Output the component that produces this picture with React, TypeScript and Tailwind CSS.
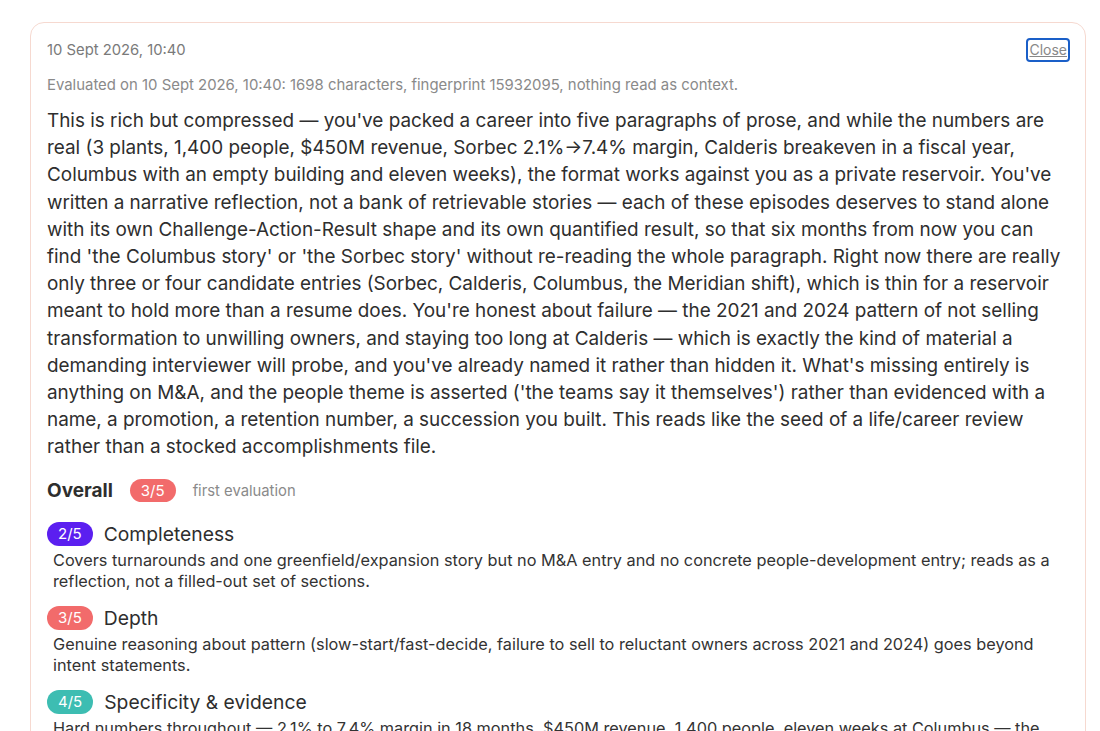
import React from 'react'

const font = { fontFamily: 'Inter, "Noto Sans", sans-serif' }

type Criterion = { score: number; title: string; text: string }

const criteria: Criterion[] = [
  {
    score: 2,
    title: 'Completeness',
    text: 'Covers turnarounds and one greenfield/expansion story but no M&A entry and no concrete people-development entry; reads as a reflection, not a filled-out set of sections.',
  },
  {
    score: 3,
    title: 'Depth',
    text: 'Genuine reasoning about pattern (slow-start/fast-decide, failure to sell to reluctant owners across 2021 and 2024) goes beyond intent statements.',
  },
  {
    score: 4,
    title: 'Specificity & evidence',
    text: 'Hard numbers throughout — 2.1% to 7.4% margin in 18 months, $450M revenue, 1,400 people, eleven weeks at Columbus — the kind of detail that survives a follow-up question from an interviewer who wants to test it.',
  },
]

function badgeColor(score: number) {
  if (score <= 2) return 'bg-[#5b1ff0]'
  if (score === 3) return 'bg-[#f26b6b]'
  return 'bg-[#3dbdb2]'
}

function Badge({ score }: { score: number }) {
  return (
    <span className={`inline-flex h-6 items-center rounded-full px-[11px] text-[15px] leading-none text-white ${badgeColor(score)}`}>
      {score}/5
    </span>
  )
}

export default function App() {
  return (
    <div className="min-h-screen bg-white pl-[30px] pr-[14px] pt-[22px] text-[#2e2e2e]" style={font}>
      <div className="rounded-[14px] border border-[#f6d9d0] bg-white px-4 pb-10 pt-[16px]">
        <div className="flex items-start justify-between">
          <div className="pt-[1px] text-[14.8px] leading-5 text-[#7a7a7a]">10 Sept 2026, 10:40</div>
          <button className="-mr-[1px] -mt-[1px] rounded-[4px] border-2 border-[#1a5fc8] px-[1px] text-[14px] leading-[20px] text-[#888] underline">
            Close
          </button>
        </div>
        <p className="mt-[13px] text-[14.9px] leading-5 text-[#8a8a8a]">
          Evaluated on 10 Sept 2026, 10:40: 1698 characters, fingerprint 15932095, nothing read as context.
        </p>
        <p className="mt-[12px] text-[18.9px] leading-[27.2px] text-[#2e2e2e]">
          This is rich but compressed — you've packed a career into five paragraphs of prose, and while the numbers are real (3 plants, 1,400 people, $450M revenue, Sorbec 2.1%→7.4% margin, Calderis breakeven in a fiscal year, Columbus with an empty building and eleven weeks), the format works against you as a private reservoir. You've written a narrative reflection, not a bank of retrievable stories — each of these episodes deserves to stand alone with its own Challenge-Action-Result shape and its own quantified result, so that six months from now you can find 'the Columbus story' or 'the Sorbec story' without re-reading the whole paragraph. Right now there are really only three or four candidate entries (Sorbec, Calderis, Columbus, the Meridian shift), which is thin for a reservoir meant to hold more than a resume does. You're honest about failure — the 2021 and 2024 pattern of not selling transformation to unwilling owners, and staying too long at Calderis — which is exactly the kind of material a demanding interviewer will probe, and you've already named it rather than hidden it. What's missing entirely is anything on M&A, and the people theme is asserted ('the teams say it themselves') rather than evidenced with a name, a promotion, a retention number, a succession you built. This reads like the seed of a life/career review rather than a stocked accomplishments file.
        </p>

        <div className="mt-[18px] flex items-center gap-[17px]">
          <span className="text-[19px] font-bold leading-6 text-[#2e2e2e]">Overall</span>
          <span className="inline-flex h-[23px] items-center rounded-full bg-[#f26b6b] px-[11px] text-[15px] leading-none text-white">
            3/5
          </span>
          <span className="text-[14.8px] text-[#8a8a8a]">first evaluation</span>
        </div>

        <div className="mt-[19px] flex flex-col gap-[14px]">
          {criteria.map(c => (
            <div key={c.title}>
              <div className="flex items-center gap-[11px]">
                <Badge score={c.score} />
                <span className="text-[19.3px] leading-6 text-[#2e2e2e]">{c.title}</span>
              </div>
              <p className="ml-1.5 mt-[4px] text-[16.3px] leading-[21px] text-[#333]">{c.text}</p>
            </div>
          ))}
        </div>
      </div>
    </div>
  )
}
